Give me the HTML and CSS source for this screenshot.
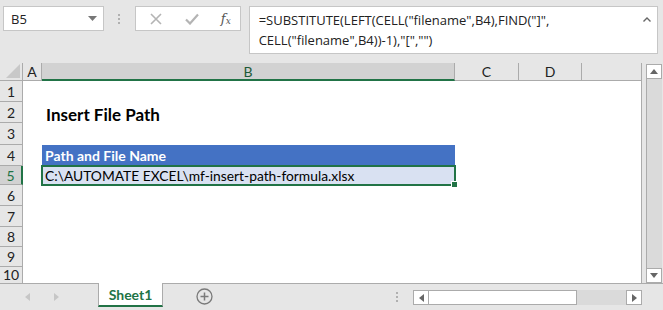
FILE: index.html
```html
<!DOCTYPE html>
<html>
<head>
<meta charset="utf-8">
<link rel="stylesheet" href="styles.css">
</head>
<body>
<div class="app">
  <div class="topbar">
    <div class="namebox">
      <span class="name">B5</span>
      <svg class="dd" width="9" height="5" viewBox="0 0 9 5"><path d="M0 0h9L4.5 5z" fill="#777"/></svg>
    </div>
    <div class="vdots"><i></i><i></i><i></i></div>
    <div class="fbtns">
      <svg width="12" height="12" viewBox="0 0 12 12"><path d="M1 1L11 11M11 1L1 11" stroke="#b4b4b4" stroke-width="1.6" fill="none"/></svg>
      <svg width="14" height="12" viewBox="0 0 14 12"><path d="M1 6.5L5 10.5L13 1.5" stroke="#b4b4b4" stroke-width="2.2" fill="none"/></svg>
      <span class="fx">f<sub>x</sub></span>
    </div>
    <div class="formula">
      <div class="ftext">=SUBSTITUTE(LEFT(CELL("filename",B4),FIND("]",<br>CELL("filename",B4))-1),"[","")</div>
      <svg class="caret" width="8" height="5" viewBox="0 0 8 5"><path d="M0.5 4.5L4 1L7.5 4.5" stroke="#666" stroke-width="1.4" fill="none"/></svg>
    </div>
  </div>

  <div class="main">
    <div class="sheet">
      <div class="grid">
        <div class="corner"><svg width="14" height="14" viewBox="0 0 14 14"><path d="M14 0V14H0z" fill="#c8c8c8"/></svg></div>
        <div class="ch">A</div>
        <div class="ch sel">B</div>
        <div class="ch">C</div>
        <div class="ch">D</div>
        <div class="ch last"></div>

        <div class="rh">1</div><div class="c span"></div>
        <div class="rh">2</div><div class="c span"><span class="title">Insert File Path</span></div>
        <div class="rh">3</div><div class="c span"></div>
        <div class="rh">4</div><div class="c"></div><div class="c hdr">Path and File Name</div><div class="c rest"></div>
        <div class="rh rsel">5</div><div class="c"></div><div class="c active">C:\AUTOMATE EXCEL\mf-insert-path-formula.xlsx<span class="handle"></span></div><div class="c rest"></div>
        <div class="rh">6</div><div class="c span"></div>
        <div class="rh">7</div><div class="c span"></div>
        <div class="rh">8</div><div class="c span"></div>
        <div class="rh">9</div><div class="c span"></div>
        <div class="rh r10">10</div><div class="c span"></div>
      </div>
    </div>
    <div class="vscroll">
      <div class="sbtn"><svg width="8" height="5" viewBox="0 0 8 5"><path d="M0 5L4 0L8 5z" fill="#666"/></svg></div>
      <div class="vtrack"></div>
      <div class="sbtn"><svg width="8" height="5" viewBox="0 0 8 5"><path d="M0 0L4 5L8 0z" fill="#666"/></svg></div>
    </div>
  </div>

  <div class="tabbar">
    <div class="nav">
      <svg width="5" height="8" viewBox="0 0 5 8"><path d="M5 0V8L0 4z" fill="#c6c6c6"/></svg>
      <svg width="5" height="8" viewBox="0 0 5 8"><path d="M0 0V8L5 4z" fill="#c6c6c6"/></svg>
    </div>
    <div class="tab">Sheet1</div>
    <div class="add"><svg width="17" height="17" viewBox="0 0 17 17"><circle cx="8.5" cy="8.5" r="7.5" stroke="#7a7a7a" stroke-width="1.3" fill="none"/><path d="M8.5 4.5V12.5M4.5 8.5H12.5" stroke="#7a7a7a" stroke-width="1.5"/></svg></div>
    <div class="hdots"><i></i><i></i><i></i></div>
    <div class="hscroll">
      <div class="hbtn"><svg width="5" height="8" viewBox="0 0 5 8"><path d="M5 0V8L0 4z" fill="#666"/></svg></div>
      <div class="thumb"></div>
      <div class="htrack"></div>
      <div class="hbtn"><svg width="5" height="8" viewBox="0 0 5 8"><path d="M0 0V8L5 4z" fill="#666"/></svg></div>
    </div>
  </div>
</div>
</body>
</html>
```

FILE: styles.css
```css
html, body {
  margin: 0;
  padding: 0;
}
body {
  background: #e6e6e6;
  font-family: "Lato", "Open Sans", sans-serif;
  overflow: hidden;
}
.app {
  width: 663px;
  height: 310px;
  display: flex;
  flex-direction: column;
}
.topbar {
  height: 63px;
  box-sizing: border-box;
  padding: 6px 5px 0 3px;
  display: flex;
  align-items: flex-start;
}
.namebox {
  width: 101px;
  height: 25px;
  box-sizing: border-box;
  background: #fff;
  border: 1px solid #c6c6c6;
  display: flex;
  align-items: center;
  justify-content: space-between;
  padding: 0 6px 0 7px;
  font-family: "Open Sans", sans-serif;
  font-size: 13px;
  color: #222;
}
.vdots {
  width: 31px;
  height: 25px;
  display: flex;
  flex-direction: column;
  align-items: center;
  justify-content: center;
  gap: 2px;
}
.vdots i, .hdots i {
  display: block;
  width: 2px;
  height: 2px;
  background: #b0b0b0;
}
.fbtns {
  width: 106px;
  height: 25px;
  box-sizing: border-box;
  background: #fff;
  border: 1px solid #c6c6c6;
  display: flex;
  align-items: center;
  padding: 0 0 0 14px;
}
.fbtns svg:nth-child(1) { margin-right: 23px; }
.fbtns svg:nth-child(2) { margin-right: 22px; }
.fx {
  font-family: "DejaVu Serif", "Liberation Serif", serif;
  font-style: italic;
  font-size: 13px;
  color: #555;
  line-height: 1;
}
.fx sub {
  font-size: 9px;
  vertical-align: -1px;
}
.formula {
  margin-left: 8px;
  width: 410px;
  height: 48px;
  box-sizing: border-box;
  background: #fff;
  border: 1px solid #c6c6c6;
  display: flex;
  justify-content: space-between;
  padding: 3px 6px 0 9px;
}
.ftext {
  font-family: "Open Sans", sans-serif;
  font-size: 13px;
  line-height: 20px;
  color: #222;
}
.caret {
  margin-top: 7px;
}
.main {
  height: 220px;
  display: flex;
  gap: 4px;
}
.sheet {
  width: 642px;
  box-sizing: border-box;
  border-right: 1px solid #ababab;
  background: #fff;
  overflow: hidden;
}
.grid {
  display: grid;
  grid-template-columns: 23px 19px 413px 64px 63px 59px;
  grid-template-rows: 18px 21px 21px 22px 21px 19px 21px 21px 20px 20px 16px;
}
.corner {
  background: #e6e6e6;
  border-right: 1px solid #ababab;
  border-bottom: 1px solid #ababab;
  box-sizing: border-box;
  display: flex;
  align-items: flex-end;
  justify-content: flex-end;
  padding: 0 2px 2px 0;
}
.ch {
  background: #e6e6e6;
  border-right: 1px solid #ababab;
  border-bottom: 1px solid #ababab;
  box-sizing: border-box;
  text-align: center;
  font-size: 14px;
  line-height: 17px;
  color: #222;
}
.ch.sel {
  background: #d2d2d2;
  border-bottom: 2px solid #217346;
  color: #1e5a37;
}
.ch.last { border-right: none; }
.rh {
  grid-column: 1;
  background: #e6e6e6;
  border-right: 1px solid #ababab;
  border-bottom: 1px solid #ababab;
  box-sizing: border-box;
  text-align: center;
  font-size: 14px;
  color: #222;
  display: flex;
  align-items: center;
  justify-content: center;
}
.rh.r10 {
  border-bottom: none;
  align-items: flex-start;
  line-height: 15px;
}
.rh.rsel {
  background: #d2d2d2;
  border-right: 2px solid #217346;
  color: #217346;
}
.c { background: #fff; position: relative; }
.span { grid-column: 2 / 7; }
.rest { grid-column: 4 / 7; }
.title {
  position: absolute;
  left: 23px;
  top: 2px;
  font-weight: bold;
  font-size: 17px;
  color: #000;
}
.hdr {
  background: #4472c4;
  color: #fff;
  font-weight: bold;
  font-size: 14px;
  line-height: 21px;
  padding-left: 3px;
  box-sizing: border-box;
}
.active {
  background: #d9e1f2;
  border: 2px solid #217346;
  margin: -1px;
  box-sizing: border-box;
  font-size: 13.8px;
  line-height: 17px;
  padding-left: 2px;
  color: #000;
  z-index: 2;
  white-space: nowrap;
}
.handle {
  position: absolute;
  right: -4px;
  bottom: -4px;
  width: 5px;
  height: 5px;
  background: #217346;
  border: 1px solid #fff;
}
.vscroll {
  width: 16px;
  display: flex;
  flex-direction: column;
  padding-top: 1px;
  box-sizing: border-box;
}
.sbtn {
  height: 15px;
  background: #fff;
  border: 1px solid #ababab;
  box-sizing: border-box;
  display: flex;
  align-items: center;
  justify-content: center;
}
.vtrack {
  flex: 1;
  background: #dadada;
  border-left: 1px solid #ababab;
}
.tabbar {
  flex: 1;
  border-top: 1px solid #ababab;
  display: flex;
  align-items: flex-start;
}
.nav {
  width: 98px;
  height: 25px;
  display: flex;
  align-items: center;
  padding-left: 25px;
  gap: 24px;
  box-sizing: border-box;
}
.tab {
  width: 65px;
  height: 24px;
  margin-top: -1px;
  box-sizing: border-box;
  background: #fff;
  border-left: 1px solid #ababab;
  border-right: 1px solid #ababab;
  border-bottom: 2px solid #217346;
  color: #217346;
  font-weight: bold;
  font-size: 14px;
  text-align: center;
  line-height: 23px;
}
.add {
  width: 50px;
  height: 25px;
  display: flex;
  align-items: center;
  justify-content: flex-end;
}
.hdots {
  width: 200px;
  height: 25px;
  display: flex;
  flex-direction: column;
  align-items: flex-end;
  justify-content: center;
  gap: 2px;
  padding-right: 15px;
  box-sizing: border-box;
}
.hscroll {
  margin-top: 6px;
  width: 229px;
  height: 15px;
  display: flex;
}
.hbtn {
  width: 16px;
  height: 15px;
  background: #fff;
  border: 1px solid #ababab;
  box-sizing: border-box;
  display: flex;
  align-items: center;
  justify-content: center;
}
.thumb {
  width: 148px;
  background: #fff;
  border: 1px solid #ababab;
  border-left: none;
  box-sizing: border-box;
}
.htrack {
  flex: 1;
  background: #dadada;
}
```
